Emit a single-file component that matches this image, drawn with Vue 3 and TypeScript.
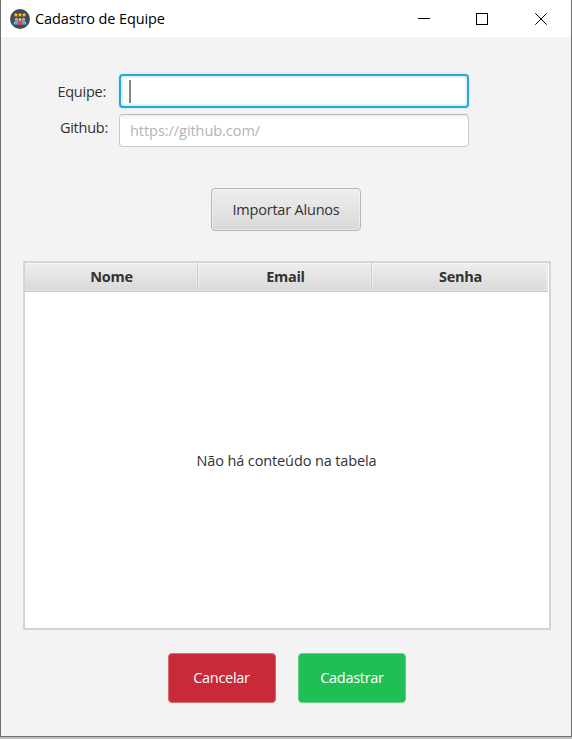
<script setup lang="ts">
import { onMounted, ref } from 'vue'

const equipe = ref('')
const github = ref('')
const equipeInput = ref<HTMLInputElement | null>(null)
const columns: string[] = ['Nome', 'Email', 'Senha']

onMounted(() => equipeInput.value?.focus())
</script>

<template>
  <div class="window">
    <header class="titlebar">
      <svg class="logo" viewBox="0 0 20 20" width="20" height="20">
        <circle cx="10" cy="10" r="10" fill="#444b54" />
        <g fill="#ffc61a">
          <path d="M5.9 3.7l.7 1.4 1.4.2-1 1 .3 1.4-1.4-.7-1.4.7.3-1.4-1-1 1.4-.2z" />
          <path d="M10 3.7l.7 1.4 1.4.2-1 1 .3 1.4-1.4-.7-1.4.7.3-1.4-1-1 1.4-.2z" />
          <path d="M14.1 3.7l.7 1.4 1.4.2-1 1 .3 1.4-1.4-.7-1.4.7.3-1.4-1-1 1.4-.2z" />
        </g>
        <circle cx="6.4" cy="10.2" r="1.5" fill="#f3a583" />
        <circle cx="13.6" cy="10.2" r="1.5" fill="#f3a583" />
        <path d="M3.7 15.4v-1.6q.2-2.2 2.7-2.2t2.6 2.2v1.6z" fill="#4fb5e6" />
        <path d="M11 15.4v-1.6q.2-2.2 2.6-2.2t2.7 2.2v1.6z" fill="#4fb5e6" />
        <circle cx="10" cy="10.7" r="1.6" fill="#f7b08c" />
        <path d="M7.4 15.8v-1.4q.3-2.2 2.6-2.2t2.6 2.2v1.4z" fill="#ee3e5c" />
      </svg>
      <h1 class="title">Cadastro de Equipe</h1>
      <div class="controls">
        <svg width="12" height="12" viewBox="0 0 12 12" shape-rendering="crispEdges"><path d="M0 5.5h12" /></svg>
        <svg width="12" height="12" viewBox="0 0 12 12" shape-rendering="crispEdges"><path d="M.5.5h11v11H.5z" /></svg>
        <svg width="12" height="12" viewBox="0 0 12 12"><path d="M.3.3l11.4 11.4M11.7.3L.3 11.7" /></svg>
      </div>
    </header>

    <main class="content">
      <form class="form" @submit.prevent>
        <label class="label label-equipe" for="equipe">Equipe:</label>
        <div class="field focused">
          <span class="caret"></span>
          <input id="equipe" ref="equipeInput" v-model="equipe" type="text" />
        </div>
        <label class="label label-github" for="github">Github:</label>
        <div class="field">
          <input id="github" v-model="github" type="text" placeholder="https://github.com/" />
        </div>
      </form>

      <button class="import" type="button">Importar Alunos</button>

      <section class="table">
        <div class="head">
          <div v-for="column in columns" :key="column" class="cell">{{ column }}</div>
        </div>
        <div class="empty"><span>Não há conteúdo na tabela</span></div>
      </section>

      <footer class="actions">
        <button class="action cancel" type="button">Cancelar</button>
        <button class="action submit" type="button">Cadastrar</button>
      </footer>
    </main>
  </div>
</template>

<style>
body {
  background: #bdbdbd;
  overflow: hidden;
}
</style>

<style scoped>
* {
  box-sizing: border-box;
}
.window {
  width: 572px;
  height: 737px;
  border: 1px solid #6e6e6e;
  border-top: 0;
  background: #f3f3f3;
  color: #323232;
  font: 14.5px/20px 'Open Sans', 'Noto Sans', sans-serif;
  letter-spacing: -0.12px;
}
.titlebar {
  display: flex;
  align-items: center;
  height: 37px;
  padding-left: 9px;
  background: #fff;
}
.title {
  margin: 0 0 0 5px;
  font-size: 14.5px;
  font-weight: 400;
  color: #000;
  letter-spacing: -0.12px;
}
.controls {
  display: flex;
  gap: 46px;
  margin-left: auto;
  padding-right: 24px;
}
.controls svg {
  display: block;
  fill: none;
  stroke: #000;
  stroke-width: 1;
}
.controls svg:last-child {
  margin-left: 1px;
}
.content {
  display: flex;
  flex-direction: column;
  align-items: center;
}
.form {
  display: grid;
  grid-template-columns: 107px 350px;
  column-gap: 11px;
  row-gap: 6px;
  align-self: flex-start;
  margin-top: 37px;
}
.label {
  justify-self: end;
  padding-top: 8px;
}
.label-equipe {
  margin-right: 2px;
  letter-spacing: -0.25px;
}
.label-github {
  padding-top: 4px;
  letter-spacing: -0.25px;
}
.field {
  display: flex;
  align-items: center;
  height: 33px;
  padding: 0 10px;
  border: 1px solid #cacaca;
  border-top-color: #bababa;
  border-radius: 4px;
  background: linear-gradient(#f1f1f1, #fff 5px);
}
.field.focused {
  height: 34px;
  padding: 0 8px;
  border: 2px solid #24a8d6;
  background: #fff;
  box-shadow: inset 0 0 0 2px #e2f2f9, 0 0 2px #a5dcef;
}
.caret {
  width: 2px;
  height: 23px;
  margin-right: -2px;
  background: #848484;
}
.field input {
  width: 100%;
  padding: 0;
  border: 0;
  outline: 0;
  background: none;
  color: #323232;
  font: inherit;
  letter-spacing: -0.05px;
  caret-color: transparent;
}
.field input::placeholder {
  color: #b3b3b3;
}
.import {
  width: 150px;
  height: 43px;
  margin-top: 41px;
  padding: 0;
  border: 1px solid #b5b5b5;
  border-radius: 4px;
  background: linear-gradient(#eee, #d9d9d9);
  box-shadow: inset 0 0 0 1px rgba(255, 255, 255, 0.4);
  color: #323232;
  font: inherit;
  letter-spacing: -0.2px;
}
.table {
  display: flex;
  flex-direction: column;
  width: 528px;
  height: 369px;
  margin-top: 30px;
  margin-left: 1px;
  border: 1px solid #d6d6d6;
  outline: 1px solid #d2d2d2;
  outline-offset: -2px;
  background: #fff;
}
.head {
  display: grid;
  grid-template-columns: 174px 174px 176px;
  width: 524px;
  height: 30px;
  border-bottom: 1px solid #c8c8c8;
}
.cell {
  padding-left: 3px;
  border-right: 1px solid #c8c8c8;
  background: linear-gradient(#efefef, #d9d9d9);
  box-shadow: inset 1px 2px 0 rgba(255, 255, 255, 0.55), inset -1px -1px 0 rgba(255, 255, 255, 0.3);
  font-weight: 700;
  letter-spacing: -0.3px;
  line-height: 29px;
  text-align: center;
}
.cell:last-child {
  border-right-color: #e4e4e4;
}
.empty {
  display: flex;
  flex: 1;
  align-items: center;
  justify-content: center;
}
.actions {
  display: flex;
  gap: 22px;
  margin-top: 23px;
  margin-left: 1px;
}
.action {
  width: 108px;
  height: 50px;
  padding: 0;
  border: 1px solid;
  border-radius: 4px;
  color: #fff;
  font: inherit;
  letter-spacing: -0.3px;
}
.cancel {
  border-color: #d96874;
  background: #ca2a37;
}
.submit {
  padding-left: 1px;
  border-color: #64d389;
  background: #20bf55;
}
</style>
